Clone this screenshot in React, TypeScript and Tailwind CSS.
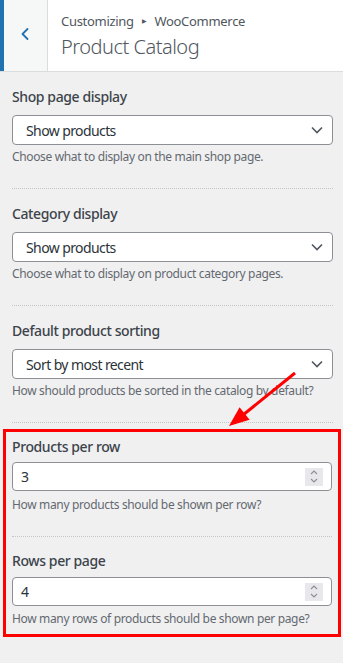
import { ChevronLeft } from 'lucide-react'

const font = { fontFamily: '"Noto Sans", "Open Sans", sans-serif' }

function SelectBox({ value }: { value: string }) {
  return (
    <div className="mt-[7px] h-[30px] flex items-center justify-between rounded-[4px] border border-[#8c8f94] bg-white pl-[13px] pr-[8px]">
      <span className="text-[14px] tracking-[-0.6px] text-[#2c3338]">{value}</span>
      <svg width="12" height="8" viewBox="0 0 12 8" className="mr-[1px]">
        <path d="M1 1.5 L6 6.5 L11 1.5" fill="none" stroke="#50575e" strokeWidth="1.6" />
      </svg>
    </div>
  )
}

function NumberBox({ value, mt }: { value: string; mt: string }) {
  return (
    <div className={`${mt} h-[29px] flex items-center justify-between rounded-[4px] border border-[#8c8f94] bg-white pl-[8px] pr-[8px]`}>
      <span className="text-[14px] text-[#2c3338]">{value}</span>
      <div className="w-[18px] h-[18px] bg-[#e7e7ec] flex flex-col items-center justify-center gap-[3px]">
        <svg width="8" height="5" viewBox="0 0 8 5">
          <path d="M1 4 L4 1 L7 4" fill="none" stroke="#8d8d94" strokeWidth="1.1" />
        </svg>
        <svg width="8" height="5" viewBox="0 0 8 5">
          <path d="M1 1 L4 4 L7 1" fill="none" stroke="#8d8d94" strokeWidth="1.1" />
        </svg>
      </div>
    </div>
  )
}

const Label = ({ children }: { children: string }) => (
  <div className="h-[22px] leading-[22px] text-[14px] font-medium tracking-[-0.4px] text-[#3c434a]">{children}</div>
)

const Desc = ({ children, mt }: { children: string; mt: string }) => (
  <div className={`${mt} h-[18px] leading-[18px] text-[12px] tracking-[-0.35px] text-[#646970]`}>{children}</div>
)

const selects = [
  { label: 'Shop page display', value: 'Show products', desc: 'Choose what to display on the main shop page.' },
  { label: 'Category display', value: 'Show products', desc: 'Choose what to display on product category pages.' },
  { label: 'Default product sorting', value: 'Sort by most recent', desc: 'How should products be sorted in the catalog by default?' },
]

export default function App() {
  return (
    <div className="relative w-[343px] h-[663px] overflow-hidden bg-[#f0f0f1]" style={font}>
      {/* Header */}
      <div className="h-[72px] flex bg-white border-b border-[#dcdcde]">
        <div className="w-[4px] bg-[#2271b1]" />
        <div className="w-[44px] bg-[#f6f7f7] border-r border-[#dcdcde] flex items-center justify-center pb-[3px]">
          <ChevronLeft className="w-[20px] h-[20px] text-[#2271b1] mr-[1px]" strokeWidth={2.2} />
        </div>
        <div className="pl-[13px] pt-[10px]">
          <div className="h-[22px] leading-[22px] text-[13px] tracking-[-0.3px] text-[#50575e] flex items-center">
            Customizing
            <span className="text-[6px] mx-[8px]">▶</span>
            WooCommerce
          </div>
          <div className="h-[30px] leading-[30px] text-[20px] font-light tracking-[-0.5px] text-[#50575e]">Product Catalog</div>
        </div>
      </div>

      {/* Controls */}
      <div className="pl-[12px] pr-[10px]">
        {selects.map((s) => (
          <div key={s.label} className="pt-[14px] pb-[22px] border-b border-dotted border-[#c3c4c7]">
            <Label>{s.label}</Label>
            <SelectBox value={s.value} />
            <Desc mt="mt-[3px]">{s.desc}</Desc>
          </div>
        ))}

        {/* highlighted group */}
        <div className="mt-[6px] ml-[-9px] mr-[-8px] border-[3px] border-[#ff0000] px-[6px] pt-[4px] pb-[6px]">
          <div className="pb-[22px] border-b border-dotted border-[#c3c4c7]">
            <Label>Products per row</Label>
            <NumberBox value="3" mt="mt-[4px]" />
            <Desc mt="mt-[5px]">How many products should be shown per row?</Desc>
          </div>
          <div className="pt-[13px]">
            <Label>Rows per page</Label>
            <NumberBox value="4" mt="mt-[5px]" />
            <Desc mt="mt-[4px]">How many rows of products should be shown per page?</Desc>
          </div>
        </div>
      </div>

      {/* annotation arrow */}
      <svg className="absolute left-0 top-0 pointer-events-none" width="343" height="663">
        <line x1="295" y1="373" x2="243" y2="415" stroke="#ff0000" strokeWidth="3" />
        <polygon points="229,426 239.6,407.3 249.6,419.7" fill="#ff0000" />
      </svg>
    </div>
  )
}
